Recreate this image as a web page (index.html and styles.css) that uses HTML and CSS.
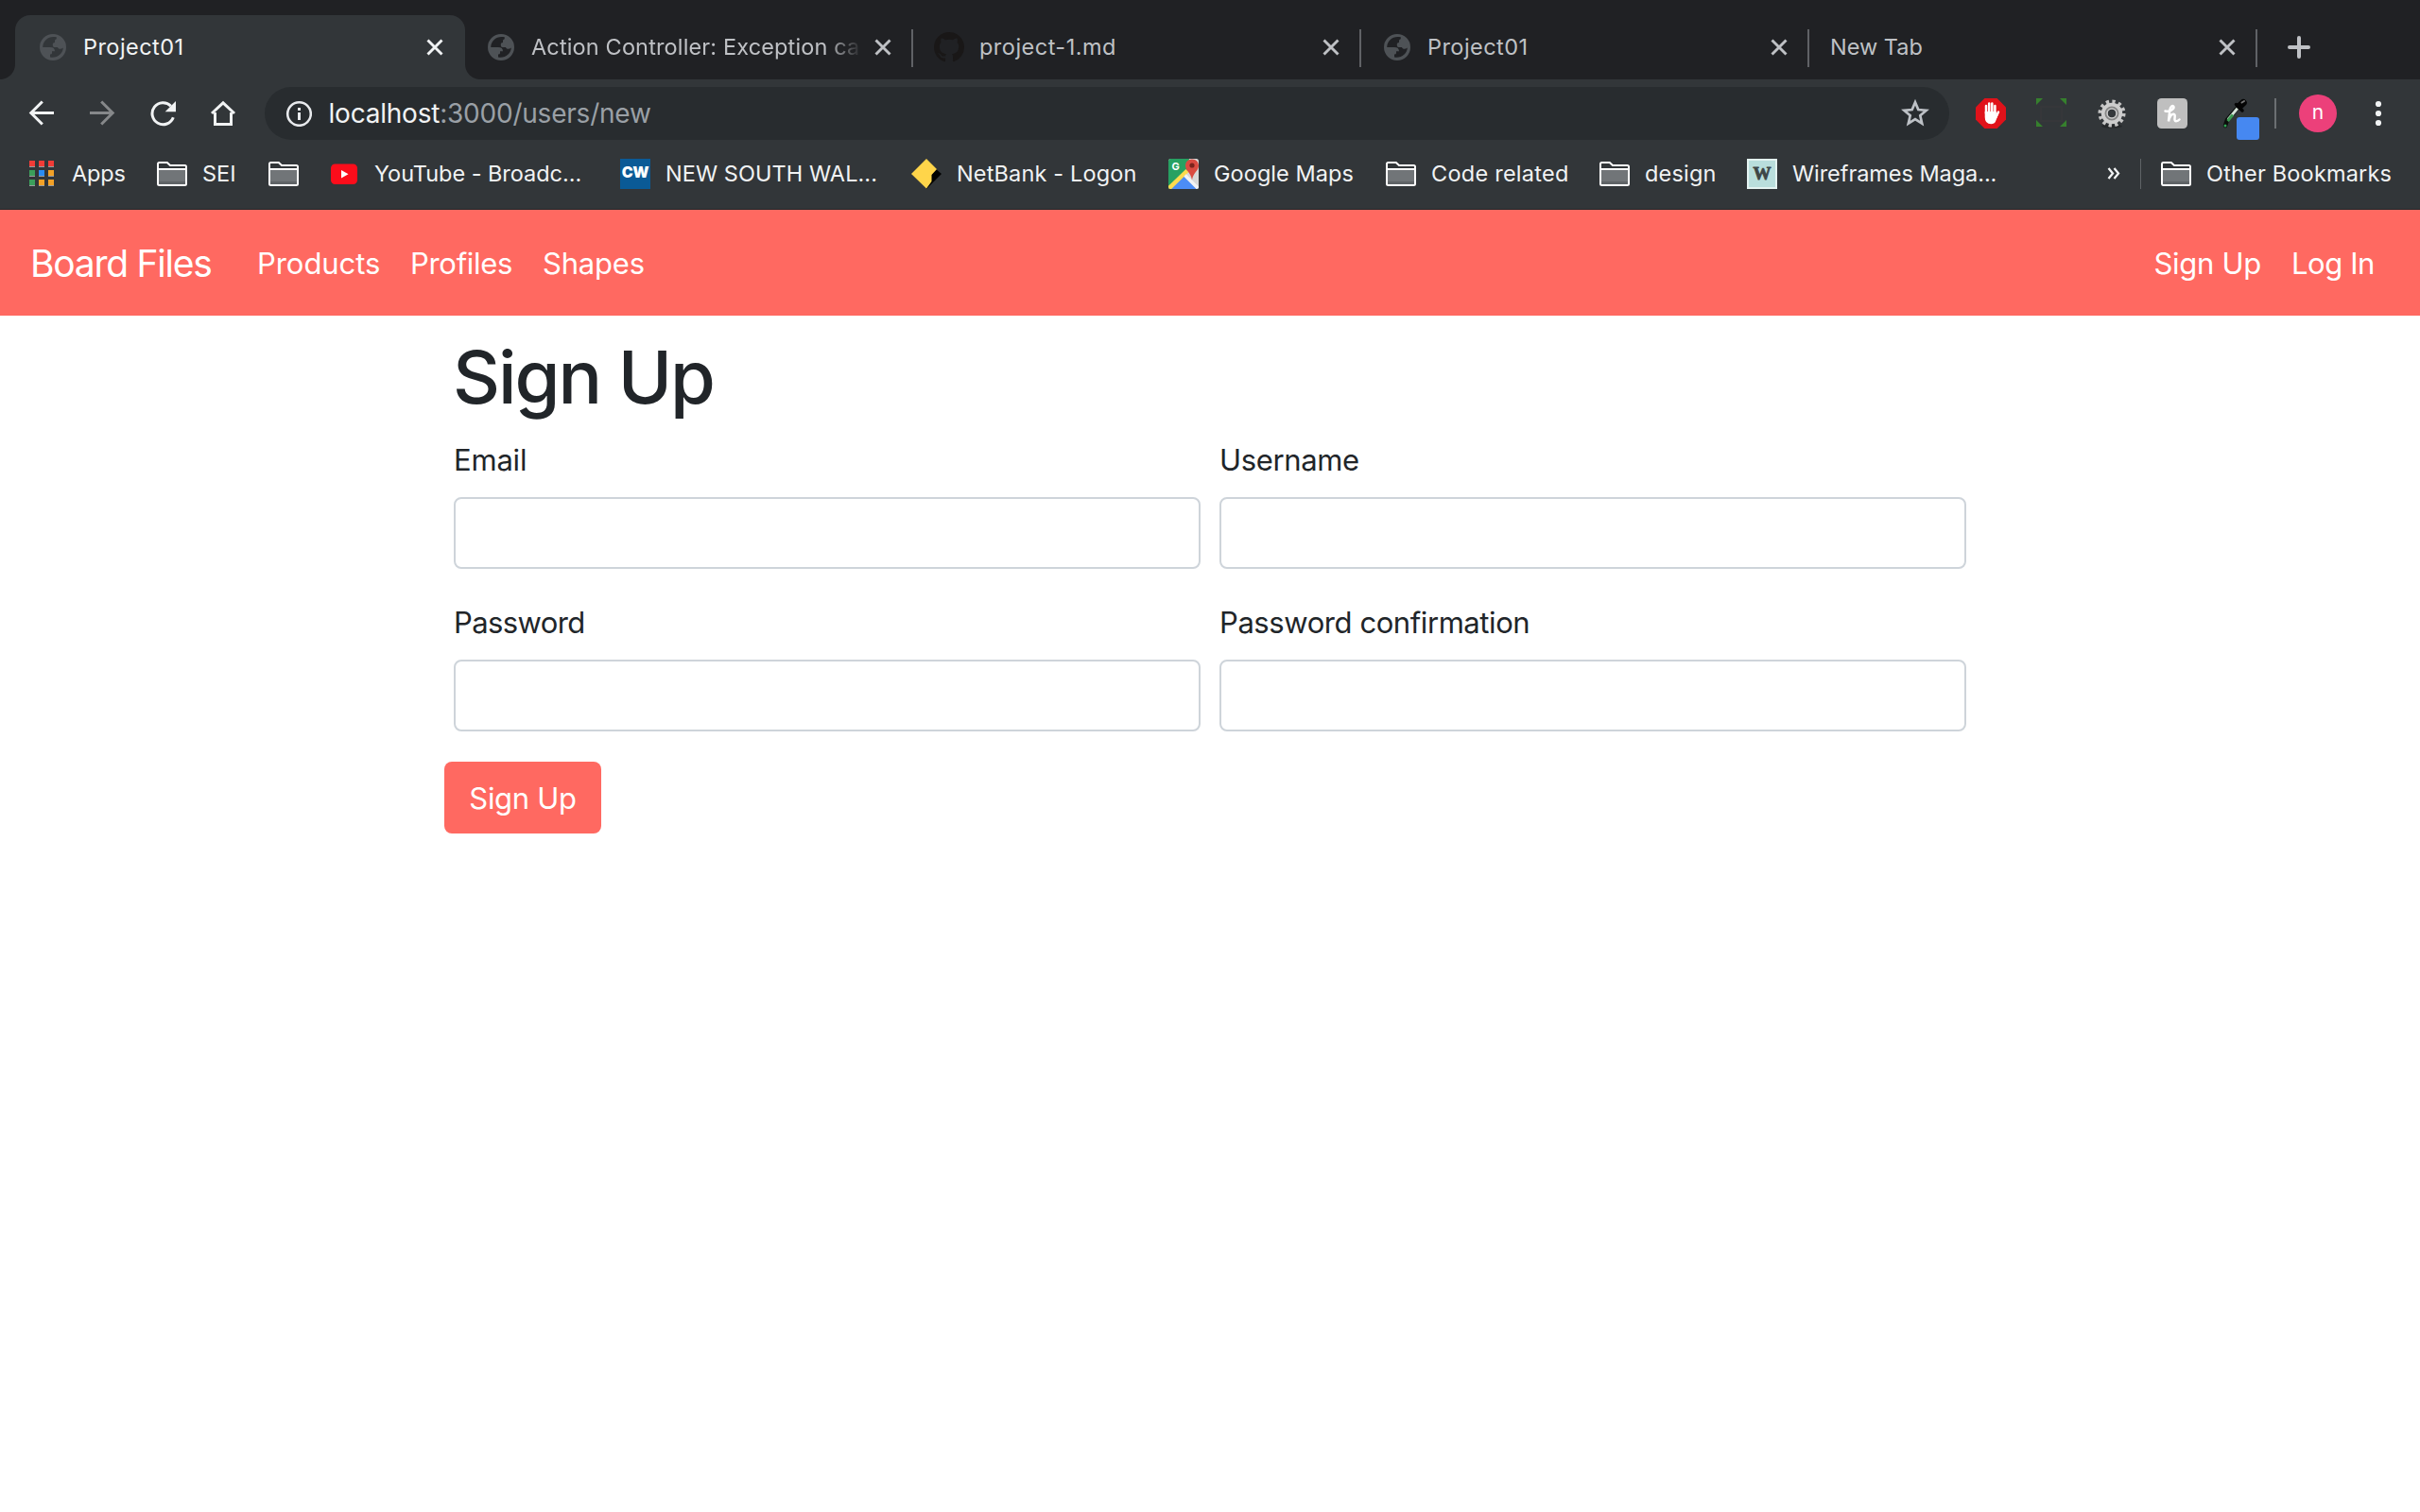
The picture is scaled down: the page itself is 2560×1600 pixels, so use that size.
FILE: index.html
```html
<!DOCTYPE html>
<html lang="en">
<head>
<meta charset="utf-8">
<title>Project01</title>
<link rel="stylesheet" href="styles.css">
</head>
<body>
<svg class="defs" width="0" height="0" aria-hidden="true">
  <symbol id="globe" viewBox="0 0 28 28">
    <path fill="#4e5256" fill-rule="evenodd" d="M14 0a14 14 0 1 0 0 28a14 14 0 1 0 0-28zM18 3.500C10 1.500 3.300 7 3.200 14H11C14.500 14 16 15.500 16 18.300H13V20.200Q13 21.500 11 21.500V24.500C18 26 24.600 21 24.800 14.500C22.500 16.500 19.500 16 19 14H15.500Q13.800 14 13.800 12V10.500Q13.800 9 16 9V7Q16 5.800 17.500 5.600Z"/>
  </symbol>
  <symbol id="close" viewBox="0 0 20 20"><path d="M2.500 2.500L17.500 17.500M17.500 2.500L2.500 17.500" fill="none" stroke="currentColor" stroke-width="2.900"/></symbol>
  <symbol id="folder" viewBox="0 0 32 26">
    <path fill="#323639" d="M1 3V24q0 1 1 1H30q1 0 1-1V5q0-1-1-1H14L11 1H2q-1 0-1 1z"/>
    <path fill="#717578" d="M2 8H30V24H2z"/><path fill="#606467" d="M2 21H30V24H2z"/>
    <path fill="none" stroke="#fff" stroke-width="2" d="M1 2.500V23.500q0 1.500 1.500 1.500H29.500q1.500 0 1.500-1.500V5.500q0-1.500-1.500-1.500H14L10.800 1H2.500Q1 1 1 2.500zM1 8H31"/>
  </symbol>
</svg>

<header class="browser">
  <div class="tabs">
    <div class="tab active">
      <svg class="fav"><use href="#globe"/></svg>
      <span class="title t-project">Project01</span>
      <svg class="close"><use href="#close"/></svg>
    </div>
    <div class="tab">
      <svg class="fav"><use href="#globe"/></svg>
      <span class="title t-action">Action Controller: Exception ca</span>
      <svg class="close"><use href="#close"/></svg>
    </div>
    <div class="tab github">
      <svg class="fav-lg" viewBox="0 0 16 16"><path fill="#191717" d="M8 0C3.580 0 0 3.580 0 8c0 3.540 2.290 6.530 5.470 7.590.4.070.55-.17.55-.38 0-.19-.01-.82-.01-1.490-2.010.37-2.530-.49-2.690-.94-.09-.23-.48-.94-.82-1.130-.28-.15-.68-.52-.01-.53.63-.01 1.080.58 1.230.82.72 1.210 1.870.87 2.330.66.07-.52.28-.87.51-1.070-1.780-.2-3.640-.89-3.640-3.950 0-.87.31-1.590.82-2.150-.08-.2-.36-1.020.08-2.120 0 0 .67-.21 2.200.82.64-.18 1.320-.27 2-.27.68 0 1.360.09 2 .27 1.530-1.040 2.200-.82 2.200-.82.44 1.100.16 1.920.08 2.120.51.56.82 1.270.82 2.150 0 3.070-1.870 3.750-3.650 3.950.29.25.54.73.54 1.480 0 1.070-.01 1.930-.01 2.200 0 .21.15.46.55.38A8.013 8.013 0 0 0 16 8c0-4.420-3.580-8-8-8z"/></svg>
      <span class="title t-md">project-1.md</span>
      <svg class="close"><use href="#close"/></svg>
    </div>
    <div class="tab">
      <svg class="fav"><use href="#globe"/></svg>
      <span class="title t-project">Project01</span>
      <svg class="close"><use href="#close"/></svg>
    </div>
    <div class="tab blank">
      <span class="title t-new">New Tab</span>
      <svg class="close"><use href="#close"/></svg>
    </div>
    <svg class="plus" viewBox="0 0 24 24"><path d="M12 2V22M2 12H22" fill="none" stroke="#bfc1c5" stroke-width="4" stroke-linecap="round"/></svg>
  </div>

  <div class="toolbar">
    <div class="cell"><svg width="28" height="28" viewBox="0 0 28 28" fill="none" stroke="#f1f3f4" stroke-width="3"><path d="M27 13.500H3M14.800 1.500L2.800 13.500L14.800 25.500"/></svg></div>
    <div class="cell"><svg width="28" height="28" viewBox="0 0 28 28" fill="none" stroke="#86888a" stroke-width="3"><path d="M1 13.500H25M13.200 1.500L25.200 13.500L13.200 25.500"/></svg></div>
    <div class="cell"><svg width="28" height="28" viewBox="0 0 28 28"><path d="M25.300 18.200A11.500 11.500 0 1 1 22.800 6.200" fill="none" stroke="#f1f3f4" stroke-width="3"/><path d="M28 1V12.200H16.700z" fill="#f1f3f4"/></svg></div>
    <div class="cell"><svg width="28" height="28" viewBox="0 0 28 28"><path d="M5.500 13V25.500H22.500V13M2 14L14 2.800L26 14" fill="none" stroke="#f1f3f4" stroke-width="3"/></svg></div>
    <div class="omnibox">
      <svg width="28" height="28" viewBox="0 0 28 28"><circle cx="14.500" cy="14.500" r="12.300" fill="none" stroke="#e8eaed" stroke-width="2.600"/><path d="M13 13h3v8h-3zM13 8h3v3h-3z" fill="#e8eaed"/></svg>
      <span class="url"><span class="host">localhost</span>:3000/users/new</span>
      <svg width="32" height="32" viewBox="0 0 32 32"><path d="M16 4.200L19.300 12L27.700 12.800L21.300 18.300L23.200 26.600L16 22.200L8.800 26.600L10.700 18.300L4.300 12.800L12.700 12Z" fill="none" stroke="#bdc1c6" stroke-width="2.700"/></svg>
    </div>
    <div class="exts">
      <div class="cell"><svg width="32" height="32" viewBox="0 0 32 32"><path fill="#e0121a" d="M9.400 0H22.600L32 9.400V22.600L22.600 32H9.400L0 22.600V9.400z"/><path fill="none" stroke="#fff" stroke-width="2.500" stroke-linecap="round" d="M11 16V8M14.200 15V5.500M17.300 15V5.500M20.400 16V8M20.800 21L24 14.500"/><path fill="#fff" d="M9.700 14H21.700V18.500L24.500 15.500Q22.800 20 21 24.500Q19.800 27.200 16.300 27.200Q9.700 27.200 9.700 20z"/></svg></div>
      <div class="cell"><svg width="32" height="32" viewBox="0 0 32 32"><path fill="none" stroke="#36373a" stroke-width="2" d="M5 9H27V24H5z"/><path fill="#36802d" d="M0 0H7L0 7zM32 0V7L25 0zM0 30V23L7 30zM32 30H25L32 23z"/></svg></div>
      <div class="cell"><svg width="32" height="32" viewBox="0 0 32 32"><ellipse cx="16" cy="29.500" rx="11" ry="2" fill="#26292b"/><circle cx="16" cy="16" r="12.300" fill="none" stroke="#c4c4c4" stroke-width="4.500" stroke-dasharray="3.200 3.240"/><circle cx="16" cy="16" r="7.700" fill="none" stroke="#cdcdcd" stroke-width="7"/><circle cx="16" cy="16" r="6.600" fill="none" stroke="#858585" stroke-width="1.800"/><circle cx="16" cy="16" r="4" fill="#34383b"/></svg></div>
      <div class="cell"><svg width="32" height="32" viewBox="0 0 32 32"><rect width="32" height="32" rx="4.500" fill="#bfbfbf"/><path d="M8.500 13.500C13 14.500 18 11.500 17.500 9C17 7 14 8 13.300 12.500L12 24.500C13 19 15.500 16.500 17.500 16.700C20.500 17 16.500 24 20 24.200Q22 24.200 23.500 22.500" fill="none" stroke="#fff" stroke-width="2.500" stroke-linecap="round"/></svg></div>
      <div class="cell"><svg width="64" height="64" viewBox="0 0 64 64"><path d="M24 45L26 39L38 25" fill="none" stroke="#0b0f0c" stroke-width="4.500" stroke-linecap="round"/><path d="M27 38.500L37 26.500" stroke="#d5e2d8" stroke-width="2.800"/><path d="M26.500 40L32 33.500" stroke="#3b9a51" stroke-width="3"/><circle cx="24" cy="45" r="1.500" fill="#31a354"/><path d="M35.500 22.500L42 29" stroke="#050505" stroke-width="3.500" stroke-linecap="round"/><path d="M39.500 24L43 20.800" stroke="#050505" stroke-width="7.500" stroke-linecap="round"/><path d="M41.500 20.500L44 19" stroke="#777" stroke-width="2" stroke-linecap="round"/><rect x="36" y="36" width="24" height="24" rx="3" fill="#4688f1"/></svg></div>
    </div>
    <div class="divider"></div>
    <div class="avatar">n</div>
    <div class="cell menu"><svg width="8" height="28" viewBox="0 0 8 28" fill="#f1f3f4"><circle cx="4" cy="4" r="3.100"/><circle cx="4" cy="14" r="3.100"/><circle cx="4" cy="24" r="3.100"/></svg></div>
  </div>

  <div class="bookmarks">
    <div class="bm w-apps"><svg width="32" height="32" viewBox="0 0 32 32"><g fill="#9a9c9e"><path d="M3 3h6v6H3zM13 3h6v6h-6zM23 3h6v6h-6zM3 13h6v6H3zM13 13h6v6h-6zM23 13h6v6h-6zM3 23h6v6H3zM13 23h6v6h-6zM23 23h6v6h-6z"/></g><path fill="#f13c37" d="M3 2h6v6H3zM13 2h6v6h-6zM23 2h6v6h-6z"/><path fill="#3b9f5b" d="M3 12h6v6H3zM3 22h6v6H3z"/><path fill="#2a8cf4" d="M13 12h6v6h-6z"/><path fill="#f2a127" d="M23 12h6v6h-6zM13 22h6v6h-6zM23 22h6v6h-6z"/></svg><span class="lb s-apps">Apps</span></div>
    <div class="bm w-sei"><svg class="folder"><use href="#folder"/></svg><span class="lb s-sei">SEI</span></div>
    <div class="bm w-empty"><svg class="folder"><use href="#folder"/></svg></div>
    <div class="bm w-yt"><svg width="32" height="32" viewBox="0 0 32 32"><rect x="2" y="5.500" width="28" height="21.500" rx="4.500" fill="#fc0d1b"/><path fill="#fff" d="M13 12V20.500L20.500 16.200z"/></svg><span class="lb s-yt">YouTube - Broadc...</span></div>
    <div class="bm w-cw"><span class="cw">CW</span><span class="lb s-cw">NEW SOUTH WAL...</span></div>
    <div class="bm w-nb"><svg width="32" height="32" viewBox="0 0 32 32"><path d="M25 10L32 16L16 32V26z" fill="#000"/><path d="M16 0L27 11L21.500 17V24L16 31.500L0 16z" fill="#ffd54a"/></svg><span class="lb s-nb">NetBank - Logon</span></div>
    <div class="bm w-maps"><svg width="32" height="32" viewBox="0 0 32 32"><defs><clipPath id="mc"><rect width="32" height="32" rx="2.500"/></clipPath></defs><g clip-path="url(#mc)"><path fill="#d8d8d8" d="M0 0H32V32H0z"/><path fill="#27a162" d="M0 0H22L20 13L1 32H0z"/><path fill="#4c8df5" d="M2 32L17 17L31 32z"/><path d="M0 32L20 12.500" stroke="#fddc4e" stroke-width="4.500"/><path d="M17.500 17.500L32 32" stroke="#f3f3f3" stroke-width="3.500"/></g><path fill="#da4b41" d="M25 0.500C20.500 0.500 18 3.500 18 7.500C18 12.500 24 15 25 22.500C26 15 32 12.500 32 7.500C32 3.500 29.500 0.500 25 0.500z"/><circle cx="25" cy="7" r="2.600" fill="#7b231c"/><text x="3.500" y="12" class="g">G</text></svg><span class="lb s-maps">Google Maps</span></div>
    <div class="bm w-code"><svg class="folder"><use href="#folder"/></svg><span class="lb s-code">Code related</span></div>
    <div class="bm w-design"><svg class="folder"><use href="#folder"/></svg><span class="lb s-design">design</span></div>
    <div class="bm"><span class="wf">W</span><span class="lb s-wire">Wireframes Maga...</span></div>
    <div class="more"><svg width="14" height="14" viewBox="0 0 14 14"><path d="M1.500 1L6 6.500L1.500 12M7.500 1L12 6.500L7.500 12" fill="none" stroke="#f1f3f4" stroke-width="2.300"/></svg></div>
    <div class="bm other"><svg class="folder"><use href="#folder"/></svg><span class="lb s-other">Other Bookmarks</span></div>
  </div>
</header>

<nav class="navbar">
  <a class="brand">Board Files</a>
  <a class="link products">Products</a>
  <a class="link profiles">Profiles</a>
  <a class="link shapes">Shapes</a>
  <a class="link signup">Sign Up</a>
  <a class="link login">Log In</a>
</nav>

<main class="container">
  <h1>Sign Up</h1>
  <form>
    <div class="fields">
      <div class="group"><label class="email" for="email">Email</label><input id="email" type="email"></div>
      <div class="group"><label class="user" for="user">Username</label><input id="user" type="text"></div>
      <div class="group"><label class="pass" for="pass">Password</label><input id="pass" type="password"></div>
      <div class="group"><label class="conf" for="conf">Password confirmation</label><input id="conf" type="password"></div>
    </div>
    <button class="btn" type="button">Sign Up</button>
  </form>
</main>
</body>
</html>
```
FILE: styles.css
```css
* { box-sizing: border-box; }
body { margin: 0; width: 2560px; height: 1600px; overflow: hidden; background: #fff; color: #212529; font-family: Inter, "Liberation Sans", sans-serif; font-weight: 430; }
svg { display: block; flex: none; }
.defs { position: absolute; }

/* Browser window */
.browser { height: 222px; background: #323639; border-bottom: 1px solid #24282a; font-size: 23.5px; white-space: nowrap; }
.tabs { display: flex; height: 84px; padding: 16px 0 0 16px; background: #202124; }
.tab { position: relative; display: flex; align-items: center; width: 474px; height: 68px; padding: 0 22px 0 24px; color: #bfc1c5; }
.tab:not(.active)::after { content: ""; position: absolute; right: 0; top: 15px; width: 2px; height: 40px; background: #606266; }
.tab.active { width: 476px; padding-left: 26px; background: #323639; border-radius: 16px 16px 0 0; color: #f1f3f4; }
.tab.active::before, .tab.active::after { content: ""; position: absolute; bottom: 0; width: 16px; height: 16px; }
.tab.active::before { left: -16px; background: radial-gradient(circle at 0 0, transparent 15.5px, #323639 16.5px); }
.tab.active::after { right: -16px; background: radial-gradient(circle at 100% 0, transparent 15.5px, #323639 16.5px); }
.tab.github { padding-left: 22px; }
.tab.blank { padding-left: 22px; }
.fav { width: 28px; height: 28px; margin-right: 18px; }
.fav-lg { width: 32px; height: 32px; margin-right: 16px; }
.title { flex: 1; margin-top: -2px; }
.t-project { letter-spacing: .45px; }
.t-action { letter-spacing: .14px; -webkit-mask: linear-gradient(90deg, #000 312px, transparent 350px); mask: linear-gradient(90deg, #000 312px, transparent 350px); }
.t-md { letter-spacing: .48px; }
.t-new { letter-spacing: 0; }
.close { width: 20px; height: 20px; }
.plus { width: 24px; height: 24px; margin: 22px 0 0 32px; }

.toolbar { display: flex; align-items: center; height: 72px; padding-left: 12px; }
.cell { display: flex; justify-content: center; align-items: center; width: 64px; height: 64px; }
.omnibox { display: flex; align-items: center; width: 1782px; height: 56px; margin-left: 12px; padding: 0 20px 0 22px; border-radius: 28px; background: #282c2f; }
.url { flex: 1; padding-left: 17.5px; font-size: 28px; color: #9aa0a6; letter-spacing: -.22px; }
.host { color: #f1f3f4; }
.exts { display: flex; margin-left: 12px; }
.divider { width: 2px; height: 32px; margin-left: 12px; background: #6b6f72; }
.avatar { width: 40px; height: 40px; margin-left: 24px; border-radius: 50%; background: #ec407a; color: #fff; font-size: 21px; line-height: 38px; text-align: center; }
.menu { margin-left: 12px; }

.bookmarks { display: flex; align-items: center; height: 56px; padding-left: 28px; color: #f1f3f4; }
.bm { display: flex; align-items: center; flex: none; }
.lb { margin: -2px 0 0 16px; }
.folder { width: 32px; height: 26px; }
.w-apps { width: 138px; }
.w-sei { width: 118px; }
.w-empty { width: 64px; }
.w-yt, .w-cw { width: 308px; }
.w-nb { width: 272px; }
.w-maps { width: 230px; }
.w-code { width: 226px; }
.w-design { width: 156px; }
.s-apps { letter-spacing: -.2px; }
.s-sei { letter-spacing: 0; }
.s-yt { letter-spacing: -.04px; }
.s-cw { letter-spacing: .06px; }
.s-nb { letter-spacing: .16px; }
.s-maps { letter-spacing: .06px; }
.s-code { letter-spacing: .25px; }
.s-design { letter-spacing: .18px; }
.s-wire { letter-spacing: -.06px; }
.s-other { letter-spacing: .18px; }
.cw { width: 32px; height: 32px; background: #0a5a96; color: #fff; font-size: 16px; font-weight: 900; line-height: 29px; text-align: center; letter-spacing: -.5px; }
.wf { width: 32px; height: 32px; border: 2px solid #e4f3f1; background: #b9dedc; color: #3e4646; font: 700 19px/28px "Liberation Serif", serif; text-align: center; -webkit-text-stroke: .8px #3e4646; }
.g { fill: #fff; font-size: 11px; font-weight: 700; }
.more { display: flex; align-items: center; justify-content: flex-end; height: 32px; margin-left: auto; padding-right: 21px; border-right: 1px solid #5f6366; }
.other { width: 295px; padding-left: 21px; }

/* Application page */
.navbar { display: flex; align-items: center; height: 112px; padding: 0 32px; background: #ff6961; color: #fff; font-size: 31px; white-space: nowrap; }
.brand { width: 224px; font-size: 39px; letter-spacing: -1.25px; }
.link { padding: 0 16px; }
.products { width: 162px; letter-spacing: -.05px; }
.profiles { width: 140px; letter-spacing: -.3px; }
.shapes { letter-spacing: -.2px; }
.signup { margin-left: auto; letter-spacing: -.3px; }
.login { letter-spacing: -.4px; }
.container { width: 1600px; margin: 0 auto; padding-top: 18px; }
h1 { margin: 0 0 14px -1px; font-size: 77.500px; font-weight: 550; line-height: 95px; height: 96px; letter-spacing: -2.050px; }
.fields { display: grid; grid-template-columns: 790px 790px; gap: 32px 20px; }
.group { display: flex; flex-direction: column; }
label { height: 48px; margin-bottom: 16px; font-size: 31px; line-height: 49px; }
.email { letter-spacing: -.2px; }
.user { letter-spacing: -.35px; }
.pass { letter-spacing: -.6px; }
.conf { letter-spacing: -.42px; }
input { width: 100%; height: 76px; border: 2px solid #ced4da; border-radius: 8px; background: #fff; }
.btn { display: block; width: 166px; height: 76px; margin: 32px 0 0 -10px; padding: 0; border: 0; border-radius: 8px; background: #ff6961; color: #fff; font: 430 31px/77px Inter, sans-serif; letter-spacing: -.3px; }
```
